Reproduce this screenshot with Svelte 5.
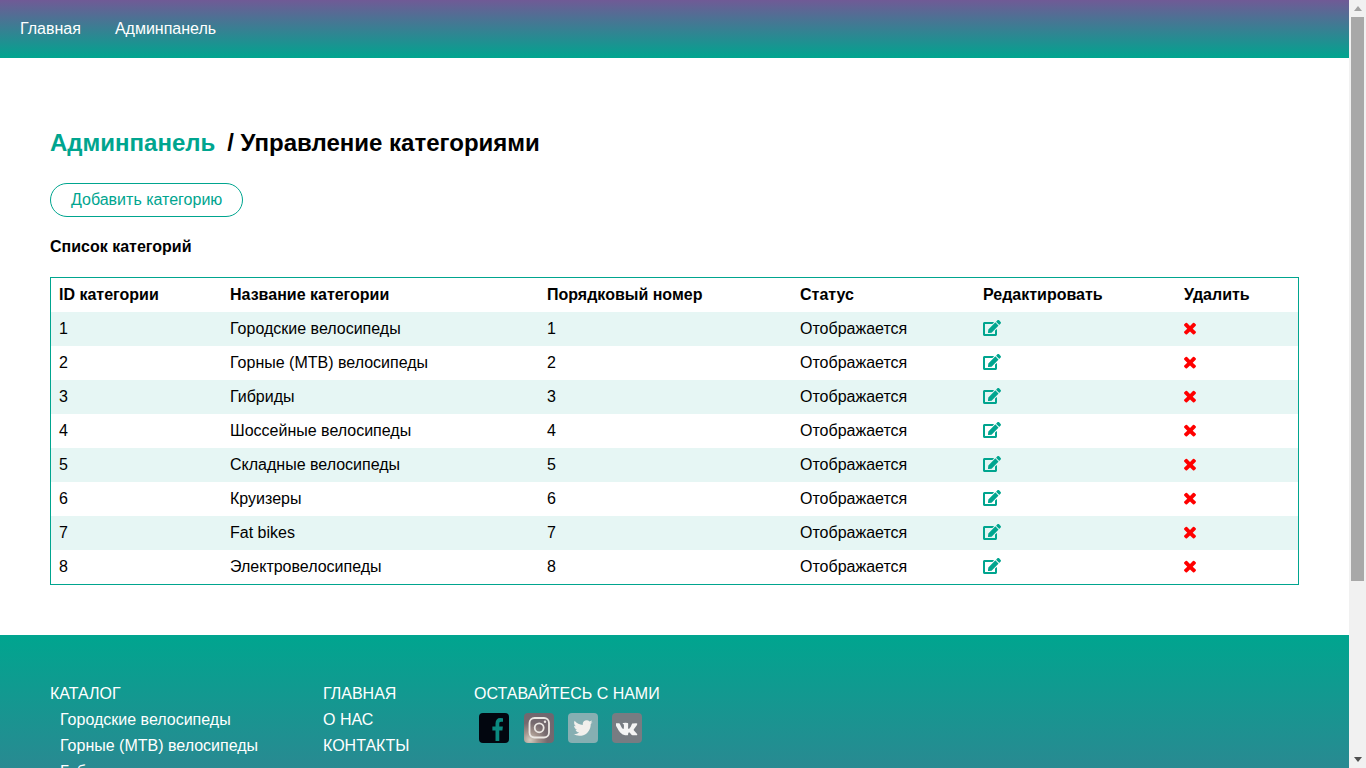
<script>
  const categories = [
    'Городские велосипеды',
    'Горные (MTB) велосипеды',
    'Гибриды',
    'Шоссейные велосипеды',
    'Складные велосипеды',
    'Круизеры',
    'Fat bikes',
    'Электровелосипеды'
  ]
</script>

<div class="shell">
  <div class="page">
    <header class="topbar">
      <a href="#home">Главная</a>
      <a href="#admin">Админпанель</a>
    </header>

    <main class="content">
      <h1><a href="#admin">Админпанель</a><span>/ Управление категориями</span></h1>
      <button type="button" class="add-btn">Добавить категорию</button>
      <h2>Список категорий</h2>

      <table>
        <colgroup>
          <col style="width: 171px">
          <col style="width: 317px">
          <col style="width: 253px">
          <col style="width: 183px">
          <col style="width: 201px">
          <col style="width: 122px">
        </colgroup>
        <thead>
          <tr>
            <th>ID категории</th>
            <th>Название категории</th>
            <th>Порядковый номер</th>
            <th>Статус</th>
            <th>Редактировать</th>
            <th>Удалить</th>
          </tr>
        </thead>
        <tbody>
          {#each categories as name, i}
            <tr>
              <td>{i + 1}</td>
              <td>{name}</td>
              <td>{i + 1}</td>
              <td>Отображается</td>
              <td>
                <svg class="edit" viewBox="0 0 576 512" aria-hidden="true">
                  <path d="M402.6 83.2l90.2 90.2c3.800 3.800 3.800 10 0 13.800L274.400 405.600l-92.800 10.300c-12.400 1.400-22.900-9.100-21.500-21.500l10.300-92.800L388.800 83.200c3.800-3.800 10-3.800 13.800 0zm162-22.900l-48.800-48.800c-15.200-15.200-39.900-15.200-55.200 0l-35.400 35.400c-3.800 3.800-3.800 10 0 13.800l90.200 90.200c3.800 3.800 10 3.800 13.800 0l35.400-35.400c15.200-15.300 15.200-40 0-55.200zM384 346.200V448H64V128h229.800c3.200 0 6.200-1.300 8.500-3.500l40-40c7.600-7.600 2.200-20.500-8.500-20.500H48C21.500 64 0 85.500 0 112v352c0 26.500 21.500 48 48 48h352c26.500 0 48-21.500 48-48V306.200c0-10.700-12.900-16-20.500-8.500l-40 40c-2.200 2.300-3.500 5.300-3.500 8.500z"/>
                </svg>
              </td>
              <td>
                <svg class="remove" viewBox="0 0 1792 1792" aria-hidden="true">
                  <path d="M1490 1322q0 40-28 68l-136 136q-28 28-68 28t-68-28l-294-294-294 294q-28 28-68 28t-68-28l-136-136q-28-28-28-68t28-68l294-294-294-294q-28-28-28-68t28-68l136-136q28-28 68-28t68 28l294 294 294-294q28-28 68-28t68 28l136 136q28 28 28 68t-28 68l-294 294 294 294q28 28 28 68z"/>
                </svg>
              </td>
            </tr>
          {/each}
        </tbody>
      </table>
    </main>

    <footer class="footer">
      <div class="col col-catalog">
        <p>КАТАЛОГ</p>
        <ul>
          {#each categories as name}
            <li>{name}</li>
          {/each}
        </ul>
      </div>
      <div class="col col-main">
        <p>ГЛАВНАЯ</p>
        <p>О НАС</p>
        <p>КОНТАКТЫ</p>
      </div>
      <div class="col">
        <p>ОСТАВАЙТЕСЬ С НАМИ</p>
        <div class="socials">
          <span class="social fb">
            <svg viewBox="448 0 895 1664" preserveAspectRatio="none"><path d="M1343 12v264h-157q-86 0-116 36t-30 108v189h293l-39 296h-254v759h-306v-759h-255v-296h255v-218q0-186 104-288.500t277-102.500q147 0 228 12z"/></svg>
          </span>
          <span class="social ig">
            <svg viewBox="0 0 30 30" fill="none" stroke="currentColor">
              <rect x="5.500" y="5" width="19.500" height="19.500" rx="5" stroke-width="1.800"/>
              <circle cx="15.200" cy="14.800" r="4.500" stroke-width="1.800"/>
              <circle cx="21" cy="8.800" r="1.200" fill="currentColor" stroke="none"/>
            </svg>
          </span>
          <span class="social tw">
            <svg viewBox="0 0 1792 1792"><path d="M1684 408q-67 98-162 167 1 14 1 42 0 130-38 259.500t-115.500 248.500-184.500 210.500-258 146-323 54.500q-271 0-496-145 35 4 76 4 225 0 401-138-105-2-188-64.500t-114-159.500q33 5 61 5 43 0 85-11-112-23-185.500-111.500t-73.500-205.500v-4q68 38 146 41-66-44-105-115t-39-154q0-88 44-163 121 149 294.500 238.500t371.500 99.500q-8-38-8-74 0-134 94.500-228.500t228.500-94.500q140 0 236 102 109-21 200-76-35 109-138 176 95-10 190-51z"/></svg>
          </span>
          <span class="social vk">
            <svg viewBox="0 0 1920 1792"><path d="M1853 520q23 64-150 294-24 32-65 85-78 100-90 131-17 41 14 81 17 21 81 82h1l1 1 1 1 2 2q141 131 191 221 3 5 6.500 12.500t7 26.500-.5 34-25 27.500-59 12.500l-256 4q-24 5-56-5t-52-22l-20-12q-30-21-70-64t-68.500-77.500-61-58-56.500-15.500q-3 1-8 3.500t-17 14.500-21.500 29.500-17 52-6.500 77.500q0 15-3.500 27.500t-7.500 18.500l-4 5q-18 19-53 22h-115q-71 4-146-16.500t-131.500-53-103-66-70.500-57.500l-25-24q-10-10-27.500-30t-71.500-91-106-151-122.500-211-130.500-272q-6-16-6-27t3-16l4-6q15-19 57-19l274-2q12 2 23 6.500t16 8.500l5 3q16 11 24 32 20 50 46 103.500t41 81.500l16 29q29 60 56 104t48.500 68.500 41.500 38.500 34 14 27-5q2-1 5-5t12-22 13.500-47 9.500-81 0-125q-2-40-9-73t-14-46l-6-12q-25-34-85-43-13-2 5-24 16-19 38-30 53-26 239-24 82 1 135 13 20 5 33.500 13.500t20.500 24 10.500 32 3.500 45.500-1 55-2.500 70.500-1.500 82.500q0 11-1 42t-.5 48 3.500 40.500 11.500 39 22.500 24.500q8 2 17 4t26-11 38-34.500 52-67 68-107.500q60-104 107-225 4-10 10-17.500t11-10.500l4-3 5-2.500 13-3 20-.5 288-2q39-5 64 2.500t31 16.500z"/></svg>
          </span>
        </div>
      </div>
    </footer>
  </div>

  <div class="scrollbar" aria-hidden="true">
    <span class="arrow up"></span>
    <span class="thumb"></span>
    <span class="arrow down"></span>
  </div>
</div>

<style>
  :global(body) {
    margin: 0;
    font-family: 'Liberation Sans', Arial, sans-serif;
    font-size: 16px;
    color: #000;
  }

  .shell {
    display: flex;
    height: 100vh;
    overflow: hidden;
  }

  .page {
    flex: 1;
    min-width: 0;
  }

  .topbar {
    display: flex;
    align-items: center;
    gap: 34px;
    height: 58px;
    padding: 0 20px;
    background: linear-gradient(to bottom, #705a96, #00a58f);
  }

  .topbar a {
    color: #fff;
    text-decoration: none;
  }

  .content {
    height: 577px;
    box-sizing: border-box;
    padding: 71px 50px 0;
  }

  h1 {
    margin: 0;
    font-size: 24px;
    line-height: 28px;
  }

  h1 a {
    color: #00a58f;
    text-decoration: none;
    margin-right: 12px;
  }

  .add-btn {
    display: block;
    height: 34px;
    margin-top: 26px;
    padding: 0 20px;
    border: 1px solid #00a58f;
    border-radius: 17px;
    background: #fff;
    color: #00a58f;
    font: inherit;
  }

  h2 {
    margin: 21px 0;
    font-size: 16px;
    line-height: 18px;
  }

  table {
    width: 1249px;
    table-layout: fixed;
    border-collapse: separate;
    border-spacing: 0;
    border: 1px solid #00a58f;
  }

  th,
  td {
    height: 34px;
    box-sizing: border-box;
    padding: 0 8px;
    text-align: left;
  }

  tbody tr:nth-child(odd) {
    background: #e6f6f4;
  }

  td svg {
    display: block;
    margin-top: -2px;
    fill: currentColor;
  }

  .edit {
    width: 18px;
    height: 16px;
    color: #00a58f;
  }

  .remove {
    width: 18px;
    height: 18px;
    margin-left: -3px;
    margin-top: -3px;
    color: #f00;
  }

  .footer {
    display: flex;
    height: 365px;
    box-sizing: border-box;
    padding: 46px 50px 0;
    background: linear-gradient(to bottom, #00a58f, #705a96);
    color: #fff;
    line-height: 26px;
  }

  .footer p {
    margin: 0;
  }

  .footer ul {
    margin: 0;
    padding: 0 0 0 10px;
    list-style: none;
  }

  .col-catalog {
    width: 273px;
  }

  .col-main {
    width: 151px;
  }

  .socials {
    display: flex;
    gap: 14.4px;
    margin: 6px 0 0 5.2px;
  }

  .social {
    display: flex;
    align-items: center;
    justify-content: center;
    width: 30px;
    height: 30px;
    border-radius: 4px;
  }

  .social svg {
    width: 22px;
    height: 22px;
    fill: currentColor;
  }

  .fb {
    background: #02060f;
    color: #0b8a80;
  }

  .fb svg {
    width: 11px;
    height: 23px;
    margin: 2px 0 0 6px;
  }

  .ig {
    background: radial-gradient(circle at 20% 90%, #d4ccc0 0%, #a3938c 22%, #75696e 48%, #6d6670 100%);
    color: #ece8e4;
  }

  .ig svg {
    width: 30px;
    height: 30px;
    fill: none;
  }

  .tw {
    background: #86afb2;
    color: #f2f0ec;
  }

  .vk {
    background: #777c82;
    color: #f4f4f4;
  }

  .scrollbar {
    flex: none;
    display: flex;
    flex-direction: column;
    align-items: center;
    justify-content: space-between;
    width: 17px;
    background: #f1f1f1;
  }

  .arrow {
    flex: none;
    width: 0;
    height: 0;
    margin: 6px 0;
    border-left: 4px solid transparent;
    border-right: 4px solid transparent;
  }

  .up {
    border-bottom: 5px solid #a3a3a3;
  }

  .down {
    border-top: 5px solid #505050;
  }

  .thumb {
    flex: none;
    width: 13px;
    height: 564px;
    margin-bottom: auto;
    background: #a8a8a8;
  }
</style>
